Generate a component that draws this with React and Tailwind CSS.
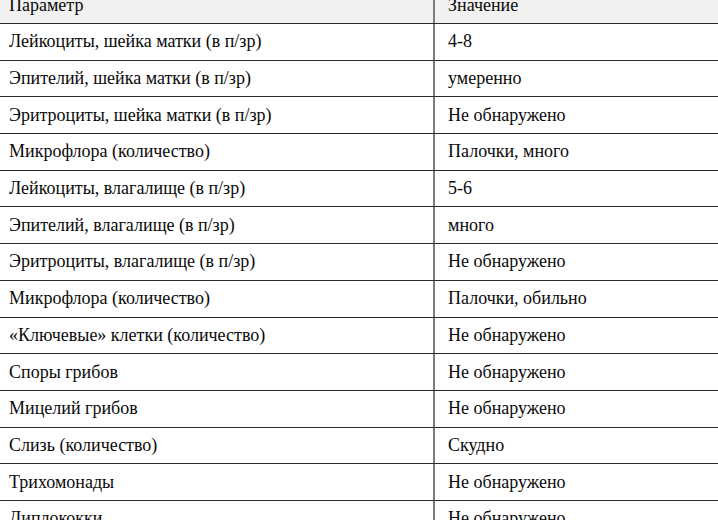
const rows = [
  ['Лейкоциты, шейка матки (в п/зр)', '4-8'],
  ['Эпителий, шейка матки (в п/зр)', 'умеренно'],
  ['Эритроциты, шейка матки (в п/зр)', 'Не обнаружено'],
  ['Микрофлора (количество)', 'Палочки, много'],
  ['Лейкоциты, влагалище (в п/зр)', '5-6'],
  ['Эпителий, влагалище (в п/зр)', 'много'],
  ['Эритроциты, влагалище (в п/зр)', 'Не обнаружено'],
  ['Микрофлора (количество)', 'Палочки, обильно'],
  ['«Ключевые» клетки (количество)', 'Не обнаружено'],
  ['Споры грибов', 'Не обнаружено'],
  ['Мицелий грибов', 'Не обнаружено'],
  ['Слизь (количество)', 'Скудно'],
  ['Трихомонады', 'Не обнаружено'],
  ['Диплококки', 'Не обнаружено'],
];

function Row({ name, value, header }) {
  return (
    <div className={`flex h-[36.7px] border-b border-[#2a2a2a] ${header ? 'bg-[#f1f1f1]' : 'bg-white'}`}>
      <div className="w-[435px] shrink-0 pl-[9px] flex items-center border-r-2 border-[#7c7c7c]">{name}</div>
      <div className="flex-1 pl-[13px] flex items-center">{value}</div>
    </div>
  );
}

export default function App() {
  return (
    <div className="w-[718px] h-[520px] overflow-hidden bg-white text-[#0a0a0a] text-[18px] font-[family-name:'Liberation_Serif',serif]">
      <div className="-mt-[12.7px]">
        <Row name="Параметр" value="Значение" header />
        {rows.map((r, i) => (
          <Row key={i} name={r[0]} value={r[1]} />
        ))}
      </div>
    </div>
  );
}
